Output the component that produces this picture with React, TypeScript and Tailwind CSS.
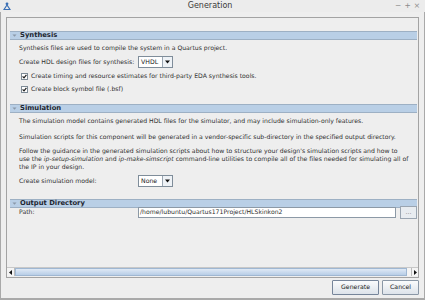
import React from "react";

const F = { fontFamily: '"DejaVu Sans", sans-serif' } as React.CSSProperties;

function Header({ title }: { title: string }) {
  return (
    <div className="flex items-center h-[9px] bg-[#b9cfe6] border-y border-[#9db0c4] ml-[3px] mr-[1px]">
      <svg width="5" height="5" viewBox="0 0 5 5" className="ml-[2px] mr-[3px]">
        <path d="M0.5 1.5 L4.5 1.5 L2.5 3.8 Z" fill="#8a98a8" />
      </svg>
      <span className="text-[6.8px] font-bold text-[#1e2630] leading-none">{title}</span>
    </div>
  );
}

function Check({ label }: { label: string }) {
  return (
    <div className="flex items-center h-[13px] pl-[14px] whitespace-nowrap">
      <div className="w-[7px] h-[7px] shrink-0 border border-[#7d8a96] bg-white flex items-center justify-center mr-[3px]">
        <svg width="5" height="5" viewBox="0 0 5 5">
          <path d="M0.6 2.4 L2 3.8 L4.4 0.8" stroke="#1a1a1a" strokeWidth="1.2" fill="none" />
        </svg>
      </div>
      <span>{label}</span>
    </div>
  );
}

function Combo({ value }: { value: string }) {
  return (
    <div className="flex shrink-0 h-[12px] w-[35px] border border-[#7f8d9a] bg-white">
      <div className="flex-1 flex items-center pl-[2px] text-[6.2px] text-[#222]">{value}</div>
      <div className="w-[10px] border-l border-[#9aa6b2] bg-[#eef2f6] flex items-center justify-center">
        <svg width="5" height="4" viewBox="0 0 5 4">
          <path d="M0 0.5 L5 0.5 L2.5 3.5 Z" fill="#111" />
        </svg>
      </div>
    </div>
  );
}

export default function App() {
  return (
    <div
      className="w-[425px] h-[300px] bg-[#eeeeee] overflow-hidden flex flex-col text-[6.15px] text-[#2e2e2e] leading-none"
      style={F}
    >
      {/* title bar */}
      <div className="h-[12px] flex items-center bg-[#ececec] relative shrink-0">
        <svg width="8" height="8" viewBox="0 0 8 8" className="ml-[3px]">
          <circle cx="4" cy="1.8" r="1.4" fill="#3a6fb5" />
          <path d="M4 3 L1 7.5 L7 7.5 Z" fill="none" stroke="#3a6fb5" strokeWidth="1.2" />
        </svg>
        <div className="flex-1 text-center text-[8px] text-[#3a3a3a] pl-[14px]">Generation</div>
        <div className="flex items-center gap-[3px] mr-[5px] text-[7.5px] text-[#8a8a8a]">
          <span>−</span>
          <span>+</span>
          <span>×</span>
        </div>
      </div>
      {/* window body */}
      <div className="flex-1 flex flex-col border-x border-b-2 border-[#a9a9a9]">
        <div className="mt-[5px] ml-[5px] mr-[5px] h-[261px] border border-[#a3a3a3] flex flex-col">
          <div className="flex-1 pt-[13px] whitespace-nowrap">
            <Header title="Synthesis" />
            <div className="pl-[12px] h-[14px] flex items-center mt-[1px]">
              Synthesis files are used to compile the system in a Quartus project.
            </div>
            <div className="flex items-center h-[12px] mt-[1px] pl-[12px]">
              <span className="w-[119px] shrink-0">Create HDL design files for synthesis:</span>
              <Combo value="VHDL" />
            </div>
            <div className="h-[2px]" />
            <Check label="Create timing and resource estimates for third-party EDA synthesis tools." />
            <Check label="Create block symbol file (.bsf)" />
            <div className="h-[8px]" />
            <Header title="Simulation" />
            <div className="pl-[12px] h-[17px] flex items-center">
              The simulation model contains generated HDL files for the simulator, and may include simulation-only features.
            </div>
            <div className="pl-[12px] h-[15px] flex items-center">
              Simulation scripts for this component will be generated in a vendor-specific sub-directory in the specified output directory.
            </div>
            <div className="pl-[12px] leading-[8px] mt-[2px]">
              Follow the guidance in the generated simulation scripts about how to structure your design's simulation scripts and how to
              <br />
              use the <i>ip-setup-simulation</i> and <i>ip-make-simscript</i> command-line utilities to compile all of the files needed for simulating all of
              <br />
              the IP in your design.
            </div>
            <div className="flex items-center h-[12px] mt-[4px] pl-[12px]">
              <span className="w-[119px] shrink-0">Create simulation model:</span>
              <Combo value="None" />
            </div>
            <div className="h-[12px]" />
            <Header title="Output Directory" />
            <div className="flex items-start pl-[12px]">
              <span className="w-[119px] shrink-0 pt-[1px]">Path:</span>
              <div className="w-[258px] shrink-0 h-[11px] border border-[#8c99a6] bg-white flex items-center pl-[1px] -mt-[1px]">
                /home/lubuntu/Quartus171Project/HLSkinkon2
              </div>
              <div className="ml-[4px] w-[17px] shrink-0 h-[13px] -mt-[2px] border border-[#9aa5b1] bg-[#e8ecf0] flex items-center justify-center text-[#777]">
                ...
              </div>
            </div>
          </div>
          {/* horizontal scrollbar */}
          <div className="h-[9px] flex border-t border-[#c8c8c8] mb-[1px]">
            <div className="w-[8px] flex items-center justify-center bg-[#f4f4f4] border-r border-[#bbb]">
              <svg width="3" height="5" viewBox="0 0 3 5"><path d="M3 0 L0 2.5 L3 5 Z" fill="#111" /></svg>
            </div>
            <div className="flex-1 bg-gradient-to-b from-[#dfe9f5] to-[#b7cde6] border border-[#9fb7d2]" />
            <div className="w-[4px] bg-[#f4f4f4]" />
            <div className="w-[7px] flex items-center justify-center bg-[#f4f4f4] border-l border-[#bbb]">
              <svg width="3" height="5" viewBox="0 0 3 5"><path d="M0 0 L3 2.5 L0 5 Z" fill="#111" /></svg>
            </div>
          </div>
        </div>
        <div className="flex justify-end gap-[3px] mt-[2px] mr-[5px]">
          <button className="w-[47px] h-[15px] border border-[#76859a] rounded-[1px] bg-gradient-to-b from-[#fafbfc] to-[#dde3ea] text-[6.2px] text-[#222]">
            Generate
          </button>
          <button className="w-[37px] h-[15px] border border-[#8a97a6] rounded-[1px] bg-gradient-to-b from-[#fafbfc] to-[#dde3ea] text-[6.2px] text-[#222]">
            Cancel
          </button>
        </div>
      </div>
    </div>
  );
}
